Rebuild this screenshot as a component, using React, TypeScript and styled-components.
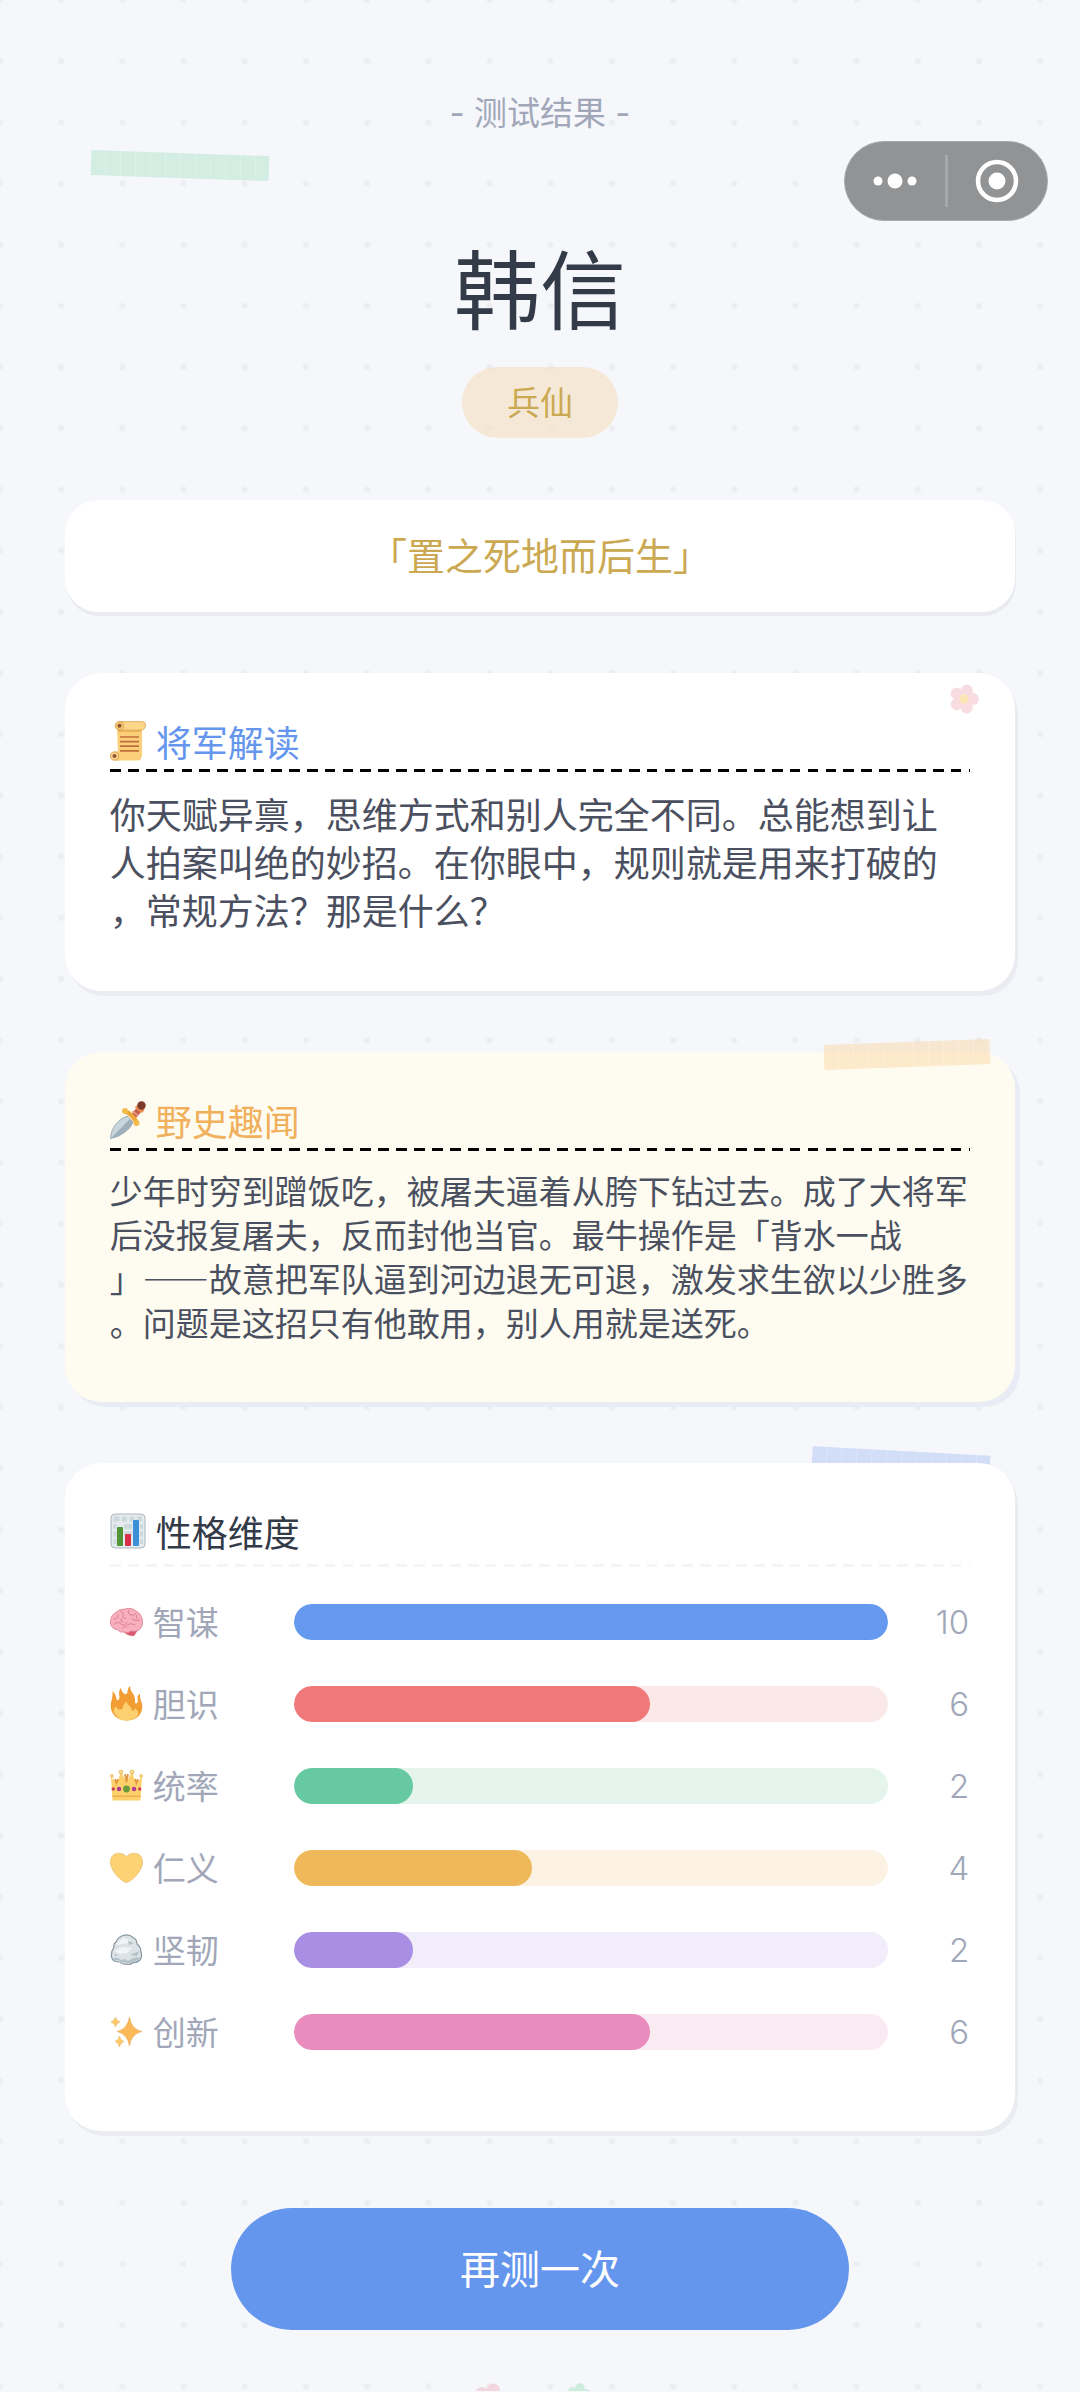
import React from "react";
import styled, { createGlobalStyle } from "styled-components";

const cjk = `"Noto Sans CJK SC", "Noto Sans", sans-serif`;
const latinFirst = `Inter, "Noto Sans CJK SC", sans-serif`;

const color = {
  page: "#f5f7fb",
  dot: "#ebedf1",
  ink: "#333a48",
  body: "#4b5060",
  muted: "#a1a7b8",
  gold: "#cba952",
  blue: "#6596ee",
};

const GlobalStyle = createGlobalStyle`
  *, *::before, *::after { box-sizing: border-box; }
  body {
    margin: 0;
    background: ${color.page};
    font-family: ${cjk};
    text-spacing-trim: space-all;
  }
  h1, h2, p, dl, dt, dd { margin: 0; font-weight: 400; }
`;

/* ---------- layout ---------- */

const Page = styled.div`
  --pitch: calc(100vw / 17.65);
  position: relative;
  min-height: 100vh;
  display: flex;
  flex-direction: column;
  padding: 93px 6% 0;
  overflow: hidden;
  background-color: ${color.page};
  background-image: radial-gradient(circle, ${color.dot} 0 2px, transparent 4px);
  background-size: var(--pitch) var(--pitch);
  background-position: calc(var(--pitch) / -2) calc(var(--pitch) / -2);
`;

const Header = styled.header`
  display: flex;
  flex-direction: column;
  align-items: center;
`;

const Crumb = styled.p`
  font-family: ${latinFirst};
  font-size: 33px;
  line-height: 40px;
  color: ${color.muted};
`;

const Name = styled.h1`
  margin-top: 99px;
  font-size: 86px;
  line-height: 108px;
  color: ${color.ink};
`;

const Badge = styled.span`
  margin-top: 27px;
  padding: 0 45px 2px;
  border-radius: 36px;
  background: rgba(245, 222, 190, 0.6);
  font-size: 33px;
  line-height: 69px;
  color: ${color.gold};
`;

const Main = styled.main`
  isolation: isolate;
  margin-top: 62px;
  display: flex;
  flex-direction: column;
  gap: 61px;
`;

const Quote = styled.p`
  padding-bottom: 4px;
  border-radius: 33px;
  background: #fff;
  box-shadow: 1px 4px 0 #e9ebf1;
  text-align: center;
  font-size: 38px;
  line-height: 108px;
  color: ${color.gold};
`;

const Card = styled.section<{ $tone?: "plain" | "warm" }>`
  position: relative;
  padding: 44px 45px 58px;
  border-radius: 36px;
  background: ${(p) => (p.$tone === "warm" ? "#fefcf0" : "#fff")};
  box-shadow: ${(p) => (p.$tone === "warm" ? "5px 5px 0 #e9ecf4" : "3px 5px 0 #eaecf2")};
`;

const CardTitle = styled.h2<{ $color: string }>`
  display: flex;
  align-items: center;
  gap: 10px;
  font-size: 36px;
  line-height: 48px;
  color: ${(p) => p.$color};
`;

const Dashes = styled.div<{ $faint?: boolean }>`
  height: 3px;
  margin-top: ${(p) => (p.$faint ? "9px" : "4px")};
  background: repeating-linear-gradient(
    90deg,
    ${(p) => (p.$faint ? "#f5f5f6" : "#000")} 0 1.25%,
    transparent 1.25% 2.08%
  );
`;

const Prose = styled.p<{ $small?: boolean }>`
  margin-top: 17px;
  font-size: ${(p) => (p.$small ? "33px" : "36px")};
  line-height: ${(p) => (p.$small ? "44px" : "48px")};
  font-variant-east-asian: full-width;
  line-break: anywhere;
  color: ${color.body};
`;

/* ---------- decorations ---------- */

const Tape = styled.span<{ $fill: string; $angle: number; $width: number }>`
  position: absolute;
  width: ${(p) => p.$width}px;
  height: 25px;
  transform: rotate(${(p) => p.$angle}deg);
  background: repeating-linear-gradient(
      90deg,
      transparent 0 14px,
      rgba(255, 255, 255, 0.2) 14px 15px
    ),
    ${(p) => p.$fill};
`;

const HeaderTape = styled(Tape)`
  top: 153px;
  left: 91px;
`;

const TapeOver = styled(Tape)`
  top: -10px;
  right: 25px;
`;

const TapeUnder = styled(Tape)`
  z-index: -1;
  top: -12px;
  right: 25px;
`;

const CornerFlower = styled.span`
  position: absolute;
  top: 11px;
  right: 36px;
  display: flex;
`;

/* ---------- capsule menu ---------- */

const Capsule = styled.nav`
  position: absolute;
  top: 141px;
  right: 32px;
  display: flex;
  align-items: center;
  width: 204px;
  height: 80px;
  border: 1px solid #a9aaab;
  border-radius: 40px;
  background: #929395;
`;

const CapsuleButton = styled.button`
  flex: 1;
  display: flex;
  align-items: center;
  justify-content: center;
  height: 100%;
  padding: 0;
  border: 0;
  background: none;
  cursor: pointer;
`;

const CapsuleDivider = styled.span`
  width: 3px;
  height: 52px;
  background: #a8a9aa;
`;

/* ---------- dimension bars ---------- */

const Rows = styled.dl`
  margin-top: 14px;
`;

const Row = styled.div`
  display: grid;
  grid-template-columns: 184px 1fr 82px;
  align-items: center;
  height: 82px;
  color: ${color.muted};
`;

const RowLabel = styled.dt`
  display: flex;
  align-items: center;
  gap: 10px;
  padding-bottom: 2px;
  font-size: 33px;
  line-height: 44px;
`;

const Track = styled.dd<{ $track: string }>`
  height: 36px;
  border-radius: 18px;
  background: ${(p) => p.$track};
  overflow: hidden;
`;

const Fill = styled.div<{ $fill: string }>`
  height: 100%;
  border-radius: 18px;
  background: ${(p) => p.$fill};
`;

const Value = styled.dd`
  padding-right: 1px;
  text-align: right;
  font-family: ${latinFirst};
  font-size: 33px;
  font-weight: 300;
  line-height: 44px;
`;

/* ---------- footer ---------- */

const Retry = styled.button`
  align-self: center;
  width: 65%;
  margin-top: 77px;
  padding: 0 0 4px;
  border: 0;
  border-radius: 61px;
  background: ${color.blue};
  color: #fff;
  font-family: ${cjk};
  font-size: 40px;
  line-height: 118px;
  cursor: pointer;
`;

const FooterDecor = styled.footer`
  display: flex;
  justify-content: center;
  align-items: flex-start;
  gap: 60px;
  height: 8px;
  margin-top: 53px;
  padding-right: 16px;
  overflow: hidden;
`;

/* ---------- drawings ---------- */

const Glyph = styled.svg`
  flex: none;
  display: block;
`;

function Flower({ size, petal, core, turn = 0 }: { size: number; petal: string; core: string; turn?: number }) {
  return (
    <Glyph width={size} height={size} viewBox="-16 -16 32 32" aria-hidden="true">
      <g transform={`rotate(${turn})`}>
        {[0, 72, 144, 216, 288].map((a) => (
          <circle key={a} cx="9.5" cy="0" r="6.4" fill={petal} transform={`rotate(${a})`} />
        ))}
        <circle r="5" fill={core} />
      </g>
    </Glyph>
  );
}

function Scroll() {
  return (
    <Glyph width="36" height="40" viewBox="0 0 36 40" aria-hidden="true">
      <path d="M7 6h25v28q0 5.500-5 5.500H5l3-6z" fill="#fbcf79" />
      <path d="M9 .6h23q3.500 0 3.500 3.400 0 5-4.500 5H9z" fill="#fcd689" stroke="#dba653" strokeWidth=".8" />
      <path d="M8 9h23v2H8z" fill="#e9b25a" />
      <circle cx="9.500" cy="4.800" r="4.300" fill="#f7c671" stroke="#d09a4c" strokeWidth=".8" />
      <circle cx="9.500" cy="4.800" r="2" fill="#8f5230" />
      <path d="M4 30.500h5v9H4z" fill="#f8cb75" />
      <circle cx="4.500" cy="35" r="4.100" fill="#fbd48a" stroke="#d09a4c" strokeWidth=".8" />
      <circle cx="4.500" cy="35" r="2" fill="#8f5230" />
      <path d="M10 16h19M10 20.600h19M10 25.200h19M10 29.800h19" stroke="#c26e3a" strokeWidth="1.700" />
    </Glyph>
  );
}

function Dagger() {
  return (
    <Glyph width="36" height="38" viewBox="0 0 36 38" aria-hidden="true">
      <path d="M.5 37.500Q1 29 6 23q5-6 11-8l6 6q-2 6-8 10-6 5-14.500 6.500z" fill="#c9d6dd" stroke="#8fa0aa" strokeWidth=".8" />
      <path d="M.5 37.500 20 18l3 3q-2 6-8 10-6 5-14.500 6.500z" fill="#9db0bb" />
      <path d="m20 15 8-10 5 4-8 9z" fill="#c9614f" />
      <path d="m22.500 10 6 5m-3-9 6 5" stroke="#f0a58c" strokeWidth="1.500" />
      <path d="M15 10q7 3 12 12" fill="none" stroke="#eda638" strokeWidth="4.500" />
      <circle cx="15" cy="10" r="3" fill="#f3bc4d" />
      <circle cx="26.500" cy="22" r="3" fill="#f3bc4d" />
      <path d="m25 6 7 6 2.500-3-6-6z" fill="#ef8d4c" />
      <circle cx="31.500" cy="4.500" r="4.200" fill="#7c3b2b" />
    </Glyph>
  );
}

function Chart() {
  return (
    <Glyph width="36" height="36" viewBox="0 0 36 36" aria-hidden="true">
      <rect x="1" y="1" width="34" height="34" rx="4" fill="#e4ebef" stroke="#a9b6c0" strokeWidth="1" />
      <path
        d="M3.500 3.500h6v5h-6zM12 3.500h5v5h-5zM19.500 3.500h5v5h-5zM27 3.500h5v5h-5zM3.500 11h3v5h-3zM14 11h8v5h-8zM3.500 18.500h3v5h-3zM14 18.500h8v5h-8zM3.500 26h3v5h-3zM30 11h3v5h-3zM30 18.500h3v5h-3zM30 26h3v5h-3z"
        fill="#cdd7de"
      />
      <rect x="7" y="14" width="6" height="19" rx="1" fill="#4f9437" />
      <rect x="15" y="21" width="6" height="12" rx="1" fill="#d9304a" />
      <rect x="23" y="7" width="6" height="26" rx="1" fill="#3a8fd6" />
    </Glyph>
  );
}

function Brain() {
  return (
    <Glyph width="33" height="33" viewBox="0 0 33 33" aria-hidden="true">
      <path d="M14 24q8-2 14 1l-4 6q-7 0-10-4z" fill="#dd5a72" />
      <path
        d="M.5 18Q0 11 5 8q4-4 10-4 7-2 11 2 6 3 6.500 10 .5 6-3.500 9-4 2-8 1-3 3-7 1-4 1-6-2-7-1-7.500-7z"
        fill="#f8b0be"
        stroke="#dc7f92"
        strokeWidth=".8"
      />
      <path
        d="M4 14q4 1 4-4M10 6q4 1 3 5t3 2M19 5q-2 4 2 5t5-2M4 19q4-3 7 0t6-2M16 21q4-4 9-1M22 14q4 3 8 1M11 14q-1 3 2 3M27 10q-2 2 0 4M12 24q1-3 4-2"
        fill="none"
        stroke="#dd7f93"
        strokeWidth="1"
        strokeLinecap="round"
      />
    </Glyph>
  );
}

function Fire() {
  return (
    <Glyph width="33" height="35" viewBox="0 0 33 35" aria-hidden="true">
      <path
        d="M.8 20C.8 15 3 12 2.500 5q3.500 3 4 8 .3 2 1.800 1Q10 13 9 8.500 9 4 11 1.500 11.500 6 14.500 8q3 1 3-3 0-3 2.500-5 0 4 2.500 7 3 4 2.500 9 0 2 1.500 1.500 2-1 1-5Q27.500 9 30 7.500 29.500 11 31 15c1 2 1.500 4 1.200 7C31.500 30 25 34.500 16.500 34.500 7 34.500.8 28 .8 20z"
        fill="#f29d33"
      />
      <path
        d="M3.500 25Q4 22 6 20q1 4 4.500 3.500 2.500-.5 3-4 .5-2 3-4 .5 3 3.500 5 2.500 2.500 2 4.500 2.500 0 3-3 3.500 3 3.500 6-3 6.500-12 6.500t-13-9z"
        fill="#fdd06f"
      />
    </Glyph>
  );
}

function Crown() {
  return (
    <Glyph width="33" height="33" viewBox="0 0 33 33" aria-hidden="true">
      <path d="M2.500 31.500 1 8l6 6 4-11 5.500 10L22 3l4 11 6-6-1.500 23.500z" fill="#fcd06a" />
      <path d="m5 10 1.500 4L8 10M15 5l1.500 8L18 5M25 10l1.500 4 1.500-4" fill="none" stroke="#e2963f" strokeWidth="1.800" />
      <g fill="#fcdc86" stroke="#dba645" strokeWidth=".6">
        <circle cx="1.800" cy="7" r="1.500" />
        <circle cx="11" cy="3" r="2" />
        <circle cx="22" cy="3" r="2" />
        <circle cx="31.200" cy="7" r="1.500" />
      </g>
      <path d="M2.500 26.500h28V28h-28z" fill="#eeb04e" />
      <circle cx="16.500" cy="20" r="3.400" fill="#6a9a3a" />
      <circle cx="9" cy="20" r="2.200" fill="#b03a94" />
      <circle cx="24" cy="20" r="2.200" fill="#b03a94" />
      <circle cx="3.300" cy="20" r="1.700" fill="#cf3f5c" />
      <circle cx="29.700" cy="20" r="1.700" fill="#cf3f5c" />
    </Glyph>
  );
}

function Heart() {
  return (
    <Glyph width="33" height="33" viewBox="0 0 33 33" aria-hidden="true">
      <path
        d="M16.500 31.500C13 31.500.4 21 .4 11 .4 5.500 4 2.200 8.500 2.200c3.500 0 6.500 1 8 3.800 1.500-2.800 4.500-3.800 8-3.800 4.500 0 8.100 3.300 8.100 8.800 0 10-12.600 20.500-16.100 20.500z"
        fill="#fdd273"
        stroke="#dfba72"
        strokeWidth=".6"
      />
    </Glyph>
  );
}

function Rock() {
  return (
    <Glyph width="33" height="33" viewBox="0 0 33 33" aria-hidden="true">
      <path
        d="M1.500 24Q1 18 4 14q-1-3 2-5 2-5 7-6.500 6-2 10 2 4 2 4 6.500 4 3 4 8 1.500 5-1 8-3 3-7 2.500-3 3-7 1.500-4 .5-6-2-3 0-5.500-1T1.500 24z"
        fill="#dbe3e7"
        stroke="#8796a0"
        strokeWidth="1.200"
      />
      <path d="M6 11q3-5 9-6 3 1 5 4-4 2-8 2-3 2-6 0zM4 18l8-4 10 1-5 5-7 1z" fill="#f0f4f6" />
      <path d="M3 25q5-1 8 2l4-1 3 2 5-3 7-1q-1 4-6 4-4 3-8 1.500-4 .5-6-2-6 0-7-2.500zM18 8l6 2-5 2zM20 22l9-4-2 5zM4 21l4 1-2 1.500z" fill="#b3c0c8" />
    </Glyph>
  );
}

function Sparkles() {
  return (
    <Glyph width="33" height="33" viewBox="0 0 33 33" aria-hidden="true">
      <path
        d="M19.500 2Q21 14 32 16.500 21 19 19.500 31 17.500 19 7 16.500 17.500 14 19.500 2z"
        fill="#fcb95a"
        stroke="#dfa252"
        strokeWidth=".5"
      />
      <g fill="#fdca66" stroke="#dfab5c" strokeWidth=".5" strokeLinejoin="round">
        <path d="M5.500 2Q6.500 6 10 7 6.500 8 5.500 12 4.500 8 1 7 4.500 6 5.500 2z" />
        <path d="M9.500 21q1 4.500 4.500 5.500-3.500 1-4.500 5.500-1-4.500-4.500-5.500 3.500-1 4.500-5.500z" />
      </g>
    </Glyph>
  );
}

/* ---------- data ---------- */

const MAX_SCORE = 10;

const dimensions = [
  { name: "智谋", Icon: Brain, score: 10, fill: "#6599ef", track: "#e6effc" },
  { name: "胆识", Icon: Fire, score: 6, fill: "#f07879", track: "#fbe9e9" },
  { name: "统率", Icon: Crown, score: 2, fill: "#66c9a2", track: "#e5f4ed" },
  { name: "仁义", Icon: Heart, score: 4, fill: "#efb95a", track: "#fcf2e4" },
  { name: "坚韧", Icon: Rock, score: 2, fill: "#a98fe3", track: "#f1edfa" },
  { name: "创新", Icon: Sparkles, score: 6, fill: "#e98bbd", track: "#faebf3" },
];

export default function App() {
  return (
    <>
      <GlobalStyle />
      <Page lang="zh-CN">
        <HeaderTape $fill="#d3ede3" $angle={2} $width={178} />
        <Capsule aria-label="小程序菜单">
          <CapsuleButton type="button" aria-label="更多">
            <Glyph width="44" height="16" viewBox="0 0 44 16" fill="#fff">
              <circle cx="5" cy="8" r="4.500" />
              <circle cx="22" cy="8" r="7.500" />
              <circle cx="39" cy="8" r="4.500" />
            </Glyph>
          </CapsuleButton>
          <CapsuleDivider />
          <CapsuleButton type="button" aria-label="关闭">
            <Glyph width="44" height="44" viewBox="0 0 44 44" fill="#fff">
              <circle cx="22" cy="22" r="19" fill="none" stroke="#fff" strokeWidth="4.500" />
              <circle cx="22" cy="22" r="8.500" />
            </Glyph>
          </CapsuleButton>
        </Capsule>

        <Header>
          <Crumb>- 测试结果 -</Crumb>
          <Name>韩信</Name>
          <Badge>兵仙</Badge>
        </Header>

        <Main>
          <Quote>「置之死地而后生」</Quote>

          <Card>
            <CornerFlower>
              <Flower size={30} petal="#f9dbe2" core="#fbe6b8" />
            </CornerFlower>
            <CardTitle $color={color.blue}>
              <Scroll />
              将军解读
            </CardTitle>
            <Dashes />
            <Prose>
              你天赋异禀，思维方式和别人完全不同。总能想到让人拍案叫绝的妙招。在你眼中，规则就是用来打破的，常规方法？那是什么？
            </Prose>
          </Card>

          <Card $tone="warm">
            <TapeOver $fill="rgba(251, 215, 165, 0.5)" $angle={-2} $width={166} />
            <CardTitle $color="#f0b05c">
              <Dagger />
              野史趣闻
            </CardTitle>
            <Dashes />
            <Prose $small>
              少年时穷到蹭饭吃，被屠夫逼着从胯下钻过去。成了大将军后没报复屠夫，反而封他当官。最牛操作是「背水一战
              <br />
              」——故意把军队逼到河边退无可退，激发求生欲以少胜多。问题是这招只有他敢用，别人用就是送死。
            </Prose>
          </Card>

          <Card>
            <TapeUnder $fill="#d2ddf7" $angle={3} $width={178} />
            <CardTitle $color={color.ink}>
              <Chart />
              性格维度
            </CardTitle>
            <Dashes $faint />
            <Rows>
              {dimensions.map(({ name, Icon, score, fill, track }) => (
                <Row key={name}>
                  <RowLabel>
                    <Icon />
                    {name}
                  </RowLabel>
                  <Track $track={track}>
                    <Fill $fill={fill} style={{ width: `${(score / MAX_SCORE) * 100}%` }} />
                  </Track>
                  <Value>{score}</Value>
                </Row>
              ))}
            </Rows>
          </Card>
        </Main>

        <Retry type="button">再测一次</Retry>

        <FooterDecor>
          <Flower size={34} petal="#f3d6de" core="#fbe3b6" />
          <Flower size={24} petal="#cdeedd" core="#fbe3b6" turn={-10} />
        </FooterDecor>
      </Page>
    </>
  );
}
